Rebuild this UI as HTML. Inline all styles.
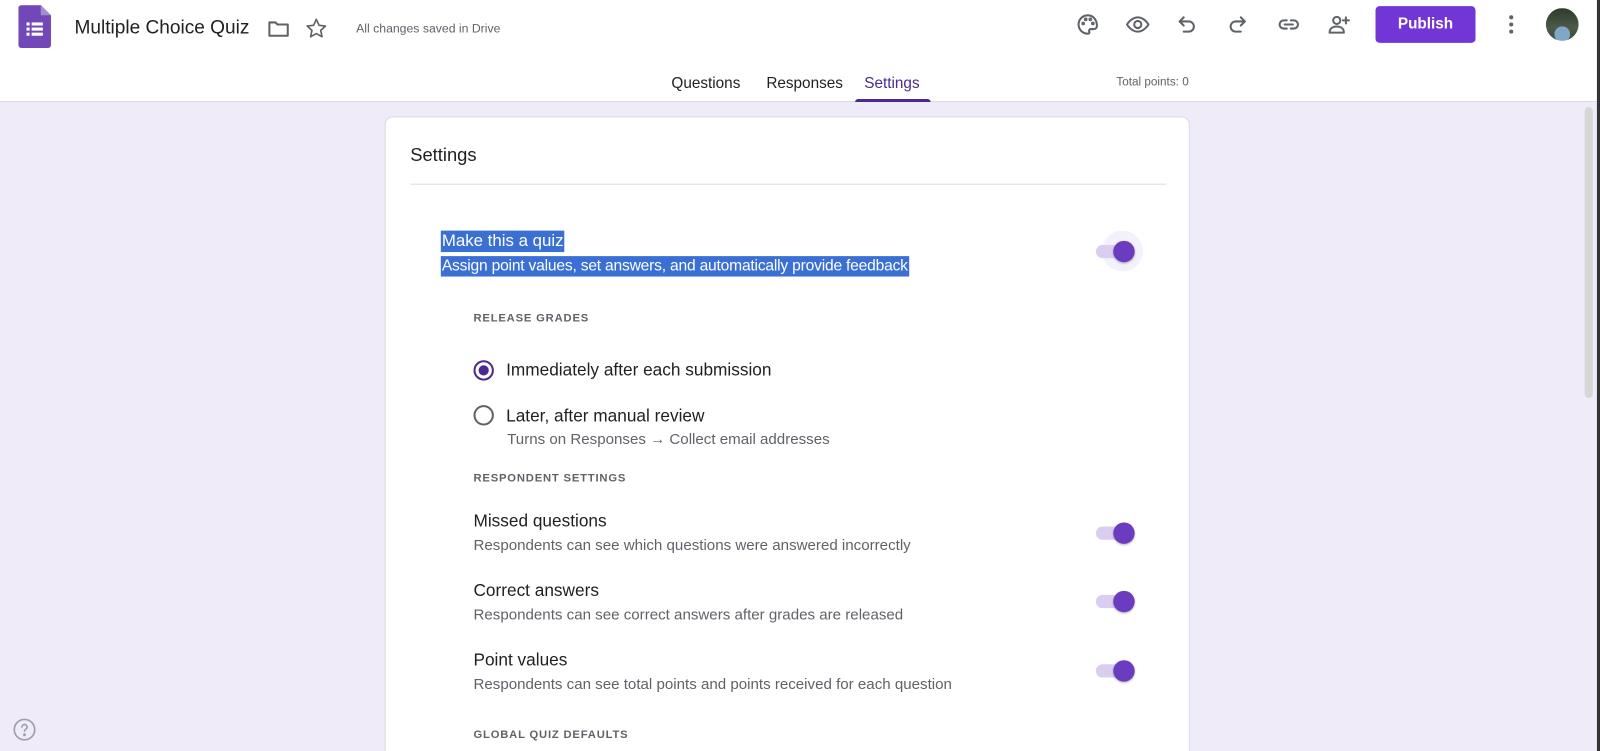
<!DOCTYPE html>
<html><head><meta charset="utf-8"><style>
*{margin:0;padding:0;box-sizing:border-box}
html,body{width:1600px;height:751px;overflow:hidden;background:#f0ebf8}
#w{position:absolute;left:0;top:0;width:1568px;height:736px;transform:scale(1.020408);transform-origin:0 0;font-family:"Liberation Sans",Arial,sans-serif;color:#202124;background:#f0ebf8;overflow:hidden}
.abs{position:absolute}
#hdr{left:0;top:0;width:1568px;height:100px;background:#fff;border-bottom:1px solid #dadce0}
.ic{position:absolute;width:24px;height:24px;fill:none;stroke:#5f6368;stroke-width:2;stroke-linecap:round;stroke-linejoin:round}
.tab{position:absolute;top:73px;font-size:15px;color:#202124}
.card{left:377px;top:114px;width:789px;height:640px;background:#fff;border-radius:8px;border:1px solid #dadce0}
.t{position:absolute;white-space:nowrap}
.lbl{font-size:11px;letter-spacing:.8px;color:#5f6368;font-weight:bold}
.main{font-size:16.9px;color:#202124}
.sub{font-size:14.8px;color:#5f6368}
.tg{position:absolute;width:40px;height:24px}
.tg .tr{position:absolute;left:0;top:6px;width:36px;height:13px;border-radius:7px;background:#d9cdf0}
.tg .kn{position:absolute;left:17px;top:2px;width:21px;height:21px;border-radius:50%;background:#6b3bc0;box-shadow:0 1px 2px rgba(0,0,0,.3)}
</style></head><body><div id="w">
<div id="hdr" class="abs">
<svg class="abs" style="left:18px;top:5px" width="32" height="42" viewBox="0 0 32 42"><path d="M3 0h19l10 10v29a3 3 0 0 1-3 3H3a3 3 0 0 1-3-3V3a3 3 0 0 1 3-3z" fill="#7248b9"/><path d="M22 0v10h10z" fill="#a48dd3"/><g fill="#fff"><rect x="8" y="17" width="3" height="3"/><rect x="13" y="17" width="11" height="3"/><rect x="8" y="22" width="3" height="3"/><rect x="13" y="22" width="11" height="3"/><rect x="8" y="27" width="3" height="3"/><rect x="13" y="27" width="11" height="3"/></g></svg>
<div class="t" style="left:73px;top:16px;font-size:18.7px;color:#202124">Multiple Choice Quiz</div>
<svg class="ic" style="left:261px;top:16px" viewBox="0 0 24 24"><path d="M3 6h6l2 2h10v11H3z"/></svg>
<svg class="ic" style="left:298px;top:16px;stroke-width:1.6" viewBox="0 0 24 24"><path d="M12 3l2.7 5.8 6.3.7-4.7 4.3 1.3 6.2L12 16.9 6.4 20l1.3-6.2L3 9.5l6.3-.7z"/></svg>
<div class="t" style="left:349px;top:21px;font-size:12px;color:#5f6368">All changes saved in Drive</div>
<svg class="ic" style="left:1054px;top:12px" viewBox="0 0 24 24"><path d="M12 3a9 9 0 0 0 0 18c1.5 0 2-1 1.5-2s0-2.5 1.5-2.5H18a3 3 0 0 0 3-3C21 7 17 3 12 3z"/><circle cx="7.5" cy="11" r=".8"/><circle cx="10" cy="7" r=".8"/><circle cx="14.5" cy="7" r=".8"/><circle cx="17" cy="11" r=".8"/></svg>
<svg class="ic" style="left:1103px;top:12px" viewBox="0 0 24 24"><path d="M1.5 12S5.5 5 12 5s10.5 7 10.5 7-4 7-10.5 7S1.5 12 1.5 12z"/><circle cx="12" cy="12" r="3.5"/></svg>
<svg class="ic" style="left:1151px;top:12px" viewBox="0 0 24 24"><path d="M9 5L5 9l4 4M5 9h9a5 5 0 0 1 0 10H9"/></svg>
<svg class="ic" style="left:1201px;top:12px" viewBox="0 0 24 24"><path d="M15 5l4 4-4 4M19 9h-9a5 5 0 0 0 0 10h5"/></svg>
<svg class="ic" style="left:1251px;top:12px" viewBox="0 0 24 24"><path d="M10 8H7a4 4 0 0 0 0 8h3M14 8h3a4 4 0 0 1 0 8h-3M8 12h8"/></svg>
<svg class="ic" style="left:1300px;top:12px" viewBox="0 0 24 24"><circle cx="10" cy="8" r="3.5"/><path d="M3 20c0-4 3-6 7-6s7 2 7 6zM19 5v6M16 8h6"/></svg>
<div class="abs" style="left:1348px;top:6px;width:98px;height:36px;background:#7235d6;border-radius:4px;color:#fff;font-weight:bold;font-size:15px;text-align:center;line-height:36px">Publish</div>
<svg class="abs" style="left:1477px;top:14px" width="8" height="20"><circle cx="4" cy="3" r="2" fill="#5f6368"/><circle cx="4" cy="10" r="2" fill="#5f6368"/><circle cx="4" cy="17" r="2" fill="#5f6368"/></svg>
<div class="abs" style="left:1515px;top:8px;width:32px;height:32px;border-radius:50%;background:radial-gradient(circle at 50% 80%,#7fa8c8 0 25%,transparent 26%),linear-gradient(#2d3a2c,#4d5a48 60%,#3b4a3c)"></div>
<div class="tab" style="left:658px">Questions</div>
<div class="tab" style="left:751px">Responses</div>
<div class="tab" style="left:847px;color:#4b2a8f">Settings</div>
<div class="abs" style="left:838px;top:97px;width:74px;height:3px;background:#4b2a8f;border-radius:3px 3px 0 0"></div>
<div class="t" style="left:1094px;top:75px;font-size:11.5px;color:#5f6368">Total points: 0</div>
</div>
<div class="abs" style="left:1553px;top:105px;width:8px;height:285px;border-radius:4px;background:#d6d6d6"></div>
<div class="abs" style="left:1565px;top:0;width:3px;height:736px;background:#333"></div>
<svg class="abs" style="left:12px;top:703px" width="24" height="24" viewBox="0 0 24 24" fill="none" stroke="#9aa0a6" stroke-width="1.6" stroke-linecap="round"><circle cx="12" cy="12" r="10"/><path d="M9.5 9.5a2.5 2.5 0 1 1 3.5 2.3c-.7.4-1 .9-1 1.7"/><circle cx="12" cy="17" r=".6" fill="#9aa0a6"/></svg>
<div class="abs card">
<div class="t" style="left:24px;top:27px;font-size:18px">Settings</div>
<div class="abs" style="left:24px;top:65px;width:741px;height:1px;background:#dadce0"></div>
<div class="t" style="left:54px;top:111px;font-size:16.5px;background:#3a6fd3;color:#fff;padding:0 1px;line-height:21px">Make this a quiz</div>
<div class="t" style="left:54px;top:136px;font-size:15.3px;background:#3a6fd3;color:#fff;padding:0 1px;line-height:20px;letter-spacing:-.2px">Assign point values, set answers, and automatically provide feedback</div>
<div class="abs" style="left:702px;top:111px;width:40px;height:40px;border-radius:50%;background:#f3f1fb"></div>
<div class="tg" style="left:696px;top:119px"><div class="tr"></div><div class="kn"></div></div>
<div class="t lbl" style="left:86px;top:191px">RELEASE GRADES</div>
<svg class="abs" style="left:85px;top:237px" width="22" height="22"><circle cx="11" cy="11" r="9" fill="none" stroke="#4b2a8f" stroke-width="2"/><circle cx="11" cy="11" r="5" fill="#4b2a8f"/></svg>
<div class="t main" style="left:118px;top:238px">Immediately after each submission</div>
<svg class="abs" style="left:85px;top:281px" width="22" height="22"><circle cx="11" cy="11" r="9" fill="none" stroke="#5f6368" stroke-width="2"/></svg>
<div class="t main" style="left:118px;top:283px">Later, after manual review</div>
<div class="t sub" style="left:119px;top:308px">Turns on Responses → Collect email addresses</div>
<div class="t lbl" style="left:86px;top:348px">RESPONDENT SETTINGS</div>
<div class="t main" style="left:86px;top:386px">Missed questions</div>
<div class="t sub" style="left:86px;top:412px">Respondents can see which questions were answered incorrectly</div>
<div class="tg" style="left:696px;top:395px"><div class="tr"></div><div class="kn"></div></div>
<div class="t main" style="left:86px;top:454px">Correct answers</div>
<div class="t sub" style="left:86px;top:480px">Respondents can see correct answers after grades are released</div>
<div class="tg" style="left:696px;top:462px"><div class="tr"></div><div class="kn"></div></div>
<div class="t main" style="left:86px;top:522px">Point values</div>
<div class="t sub" style="left:86px;top:548px">Respondents can see total points and points received for each question</div>
<div class="tg" style="left:696px;top:530px"><div class="tr"></div><div class="kn"></div></div>
<div class="t lbl" style="left:86px;top:599px">GLOBAL QUIZ DEFAULTS</div>
</div>
</div></body></html>
